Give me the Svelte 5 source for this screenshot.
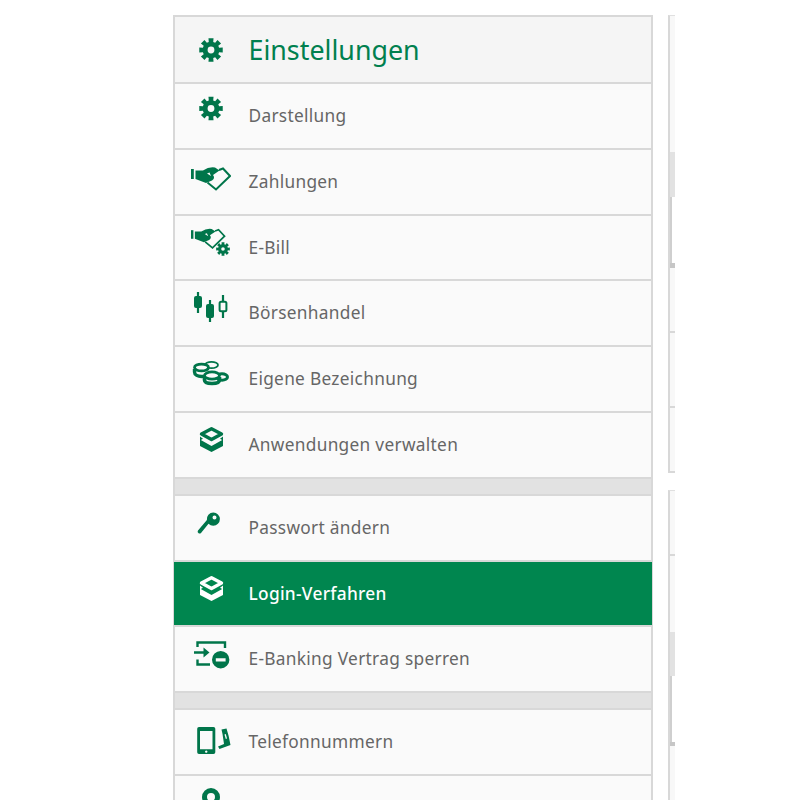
<script lang="ts">
const groups = [
  [
    { icon: 'gear', label: 'Darstellung' },
    { icon: 'hand', label: 'Zahlungen' },
    { icon: 'ebill', label: 'E-Bill' },
    { icon: 'candles', label: 'Börsenhandel' },
    { icon: 'coins', label: 'Eigene Bezeichnung' },
    { icon: 'layers', label: 'Anwendungen verwalten' },
  ],
  [
    { icon: 'key', label: 'Passwort ändern' },
    { icon: 'layers', label: 'Login-Verfahren', active: true },
    { icon: 'block', label: 'E-Banking Vertrag sperren' },
  ],
  [
    { icon: 'phone', label: 'Telefonnummern' },
    { icon: 'pin', label: '' },
  ],
]

// right hand table, only its left edge is visible
const strips = [
  [
    { kind: 'plain', h: 136 },
    { kind: 'head', h: 45 },
    { kind: 'inner', h: 66 },
    { kind: 'foot', h: 5 },
    { kind: 'plain line', h: 65 },
    { kind: 'plain line', h: 75 },
    { kind: 'plain line', h: 65 },
  ],
  [
    { kind: 'plain line', h: 65 },
    { kind: 'plain', h: 76 },
    { kind: 'head', h: 44 },
    { kind: 'inner', h: 66 },
    { kind: 'foot', h: 4 },
    { kind: 'plain', h: 60 },
  ],
]

function gearPath(cx: number, cy: number, R: number, r: number, hole: number) {
  const pts: string[] = []
  const teeth = 8
  const step = (Math.PI * 2) / teeth
  for (let i = 0; i < teeth; i++) {
    const a = i * step
    const offs = [
      [-0.34, r],
      [-0.27, R],
      [0.27, R],
      [0.34, r],
    ]
    for (const [o, rad] of offs) {
      const t = a + o * step
      pts.push(`${(cx + Math.cos(t) * rad).toFixed(2)} ${(cy + Math.sin(t) * rad).toFixed(2)}`)
    }
  }
  const c = `M${cx - hole} ${cy}a${hole} ${hole} 0 1 0 ${hole * 2} 0a${hole} ${hole} 0 1 0 ${-hole * 2} 0Z`
  return `M${pts.join('L')}Z${c}`
}
</script>

{#snippet handShape()}
  <rect x="0" y="13" width="2.8" height="10" />
  <path d="M16.5 26.5L25 33.5L39 20L32 12.5L28 14" fill="none" stroke="currentColor" stroke-width="2" />
  <path fill-rule="evenodd" d="M4.5 14.5H12Q18 10.5 24 11.5L28.5 14.5L22 19Q24.5 22 21 24.5L15 27L4.5 23ZM16 17.5L20 20L18.5 16.5Z" />
{/snippet}

{#snippet icon(name: string)}
  <svg class="icon" viewBox="0 0 40 40" width="40" height="40" fill="currentColor" aria-hidden="true">
    {#if name === 'gear'}
      <path fill-rule="evenodd" d={gearPath(20, 18.5, 12, 8.4, 3.4)} />
    {:else if name === 'hand'}
      {@render handShape()}
    {:else if name === 'ebill'}
      <g transform="translate(0 -3) scale(.86)">
        {@render handShape()}
      </g>
      <path fill-rule="evenodd" d={gearPath(32, 27, 7, 5, 1.8)} />
    {:else if name === 'candles'}
      <path d="M7 5V26M19 13V35M32 8V14M32 24V31" fill="none" stroke="currentColor" stroke-width="2.2" />
      <rect x="3" y="9" width="8" height="12" rx="2" />
      <rect x="15" y="17" width="8" height="14" rx="2" />
      <rect x="28.6" y="14.8" width="6.8" height="9.4" rx="1.5" fill="none" stroke="currentColor" stroke-width="2" />
    {:else if name === 'coins'}
      <g fill="none" stroke="currentColor">
        <ellipse cx="20.5" cy="12" rx="6.5" ry="3.2" stroke-width="1.8" />
        <ellipse cx="31" cy="24" rx="5.5" ry="3.2" stroke-width="3" />
        <ellipse cx="10.5" cy="14.5" rx="7" ry="3.4" stroke-width="2.8" fill="var(--row-bg)" />
        <path d="M3.5 16V19C3.5 22 7 23.5 10.5 23.5C12 23.5 13.500 23.2 15 22.8" stroke-width="3.4" />
        <ellipse cx="21" cy="22.5" rx="7.5" ry="3.6" stroke-width="2.8" fill="var(--row-bg)" />
        <path d="M13.5 24V27C13.5 29.5 17 30.5 21 30.5S28.5 29.5 28.5 27V24" stroke-width="3.6" />
      </g>
    {:else if name === 'layers'}
      <path d="M20.5 9.8L30.5 15L20.5 20.500L10.5 15Z" fill="none" stroke="currentColor" stroke-width="3.4" stroke-linejoin="round" />
      <path d="M9 17.5L12 19.8L9.8 21L20.5 27L31.2 21L29 19.8L32 17.5V27L20.5 33L9 27Z" />
    {:else if name === 'key'}
      <path fill-rule="evenodd" d="M22.3 10.5a6.6 6.6 0 1 1 0 13.2a6.6 6.6 0 0 1 -4.8 -2L10 31a2 2 0 0 1 -3 -2.6L15.9 18a6.6 6.6 0 0 1 6.4 -7.5ZM23.5 13.5a2 2 0 1 0 0 4a2 2 0 0 0 0 -4Z" />
    {:else if name === 'block'}
      <path d="M6.5 14V9.5H34V15M6.5 26.5V31.5H19M3 19.5H13" fill="none" stroke="currentColor" stroke-width="2.4" />
      <path d="M12.5 14.5L18.5 19.5L12.5 24.5Z" />
      <path fill-rule="evenodd" d="M21 26.7a8.7 8.7 0 1 1 17.4 0a8.7 8.7 0 1 1 -17.4 0ZM24.8 25.2V28.4H34.6V25.2Z" />
    {:else if name === 'phone'}
      <path fill-rule="evenodd" d="M8 11H22.5A1.8 1.8 0 0 1 24.3 12.8V36.2A1.8 1.8 0 0 1 22.5 38H8A1.8 1.8 0 0 1 6.2 36.2V12.8A1.8 1.8 0 0 1 8 11ZM9 15V33.2H21.5V15ZM15.2 34.4a1.2 1.2 0 1 0 .1 0Z" />
      <path fill-rule="evenodd" d="M30.5 13.5L35.5 12.5Q38 20 39.5 29L28.5 33L27 30.5L33 28L31.5 18ZM33.5 18.5L34.8 23L36 22.5L34.8 18Z" />
    {:else if name === 'pin'}
      <path fill-rule="evenodd" d="M20 6a9 9 0 0 1 9 9c0 6-6 12-9 16c-3-4-9-10-9-16a9 9 0 0 1 9-9ZM20 11a4 4 0 1 0 0 8a4 4 0 0 0 0-8Z" />
    {/if}
  </svg>
{/snippet}

<div class="page">
  <nav class="menu">
    <h1 class="title">
      <svg class="icon" viewBox="0 0 40 40" width="40" height="40" fill="currentColor" aria-hidden="true">
        <path fill-rule="evenodd" d={gearPath(20, 20, 12, 8.4, 3.4)} />
      </svg>
      <span>Einstellungen</span>
    </h1>
    {#each groups as group, i}
      {#if i > 0}<div class="band"></div>{/if}
      {#each group as item}
        <a class="row" class:active={item.active} href="#top">
          {@render icon(item.icon)}
          <span>{item.label}</span>
        </a>
      {/each}
    {/each}
  </nav>

  <div class="side">
    {#each strips as strip}
      <div class="strip">
        {#each strip as seg}
          <div class="seg {seg.kind}" style="height: {seg.h}px"></div>
        {/each}
      </div>
    {/each}
  </div>
</div>

<style>
  :global(body) {
    background: #fff;
  }

  .page {
    display: flex;
    gap: 15px;
    height: 785px;
    overflow: hidden;
    padding: 15px 0 0 173px;
    font-family: 'Noto Sans', 'Open Sans', sans-serif;
  }

  .menu {
    --row-bg: #fafafa;
    width: 480px;
    height: 900px;
    box-sizing: border-box;
    border: 2px solid #d8d8d8;
    border-bottom: 0;
    flex-shrink: 0;
  }

  .title {
    display: flex;
    align-items: center;
    gap: 17.5px;
    box-sizing: border-box;
    height: 67px;
    margin: 0;
    padding: 0 0 0 16px;
    background: #f5f5f5;
    border-bottom: 2px solid #d8d8d8;
    color: #00804f;
    font-size: 26.8px;
    font-weight: 400;
  }

  .title span {
    margin-bottom: 1px;
  }

  .title .icon {
    color: #00754a;
  }

  .row {
    display: flex;
    align-items: flex-start;
    gap: 17.5px;
    box-sizing: border-box;
    height: 65.8px;
    padding: 6px 0 0 16px;
    background: var(--row-bg);
    border-bottom: 2px solid #d8d8d8;
    color: #666;
    font-size: 17.3px;
    line-height: 24px;
    letter-spacing: 0.3px;
    text-decoration: none;
  }

  .row span {
    margin-top: 14px;
  }

  .row .icon {
    flex-shrink: 0;
    color: #00754a;
  }

  .row.active {
    --row-bg: #00864f;
    margin: 0 -1px;
    padding-left: 17px;
    background: #00864f;
    color: #fff;
    font-weight: 500;
  }

  .row.active .icon {
    color: #fff;
  }

  .band {
    height: 15px;
    background: #e2e2e2;
    border-bottom: 2px solid #d8d8d8;
  }

  .side {
    display: flex;
    flex-direction: column;
    gap: 17px;
    width: 7px;
    flex-shrink: 0;
  }

  .strip {
    box-sizing: border-box;
    border-left: 2px solid #d8d8d8;
    border-top: 1px solid #e0e0e0;
  }

  .seg {
    box-sizing: border-box;
    background: #f8f8f8;
  }

  .seg.line {
    border-bottom: 2px solid #d8d8d8;
  }

  .seg.head {
    background: #e2e2e2;
  }

  .seg.inner {
    background: #fff;
    border-left: 2px solid #cfcfcf;
  }

  .seg.foot {
    background: #c6c6c6;
  }
</style>
